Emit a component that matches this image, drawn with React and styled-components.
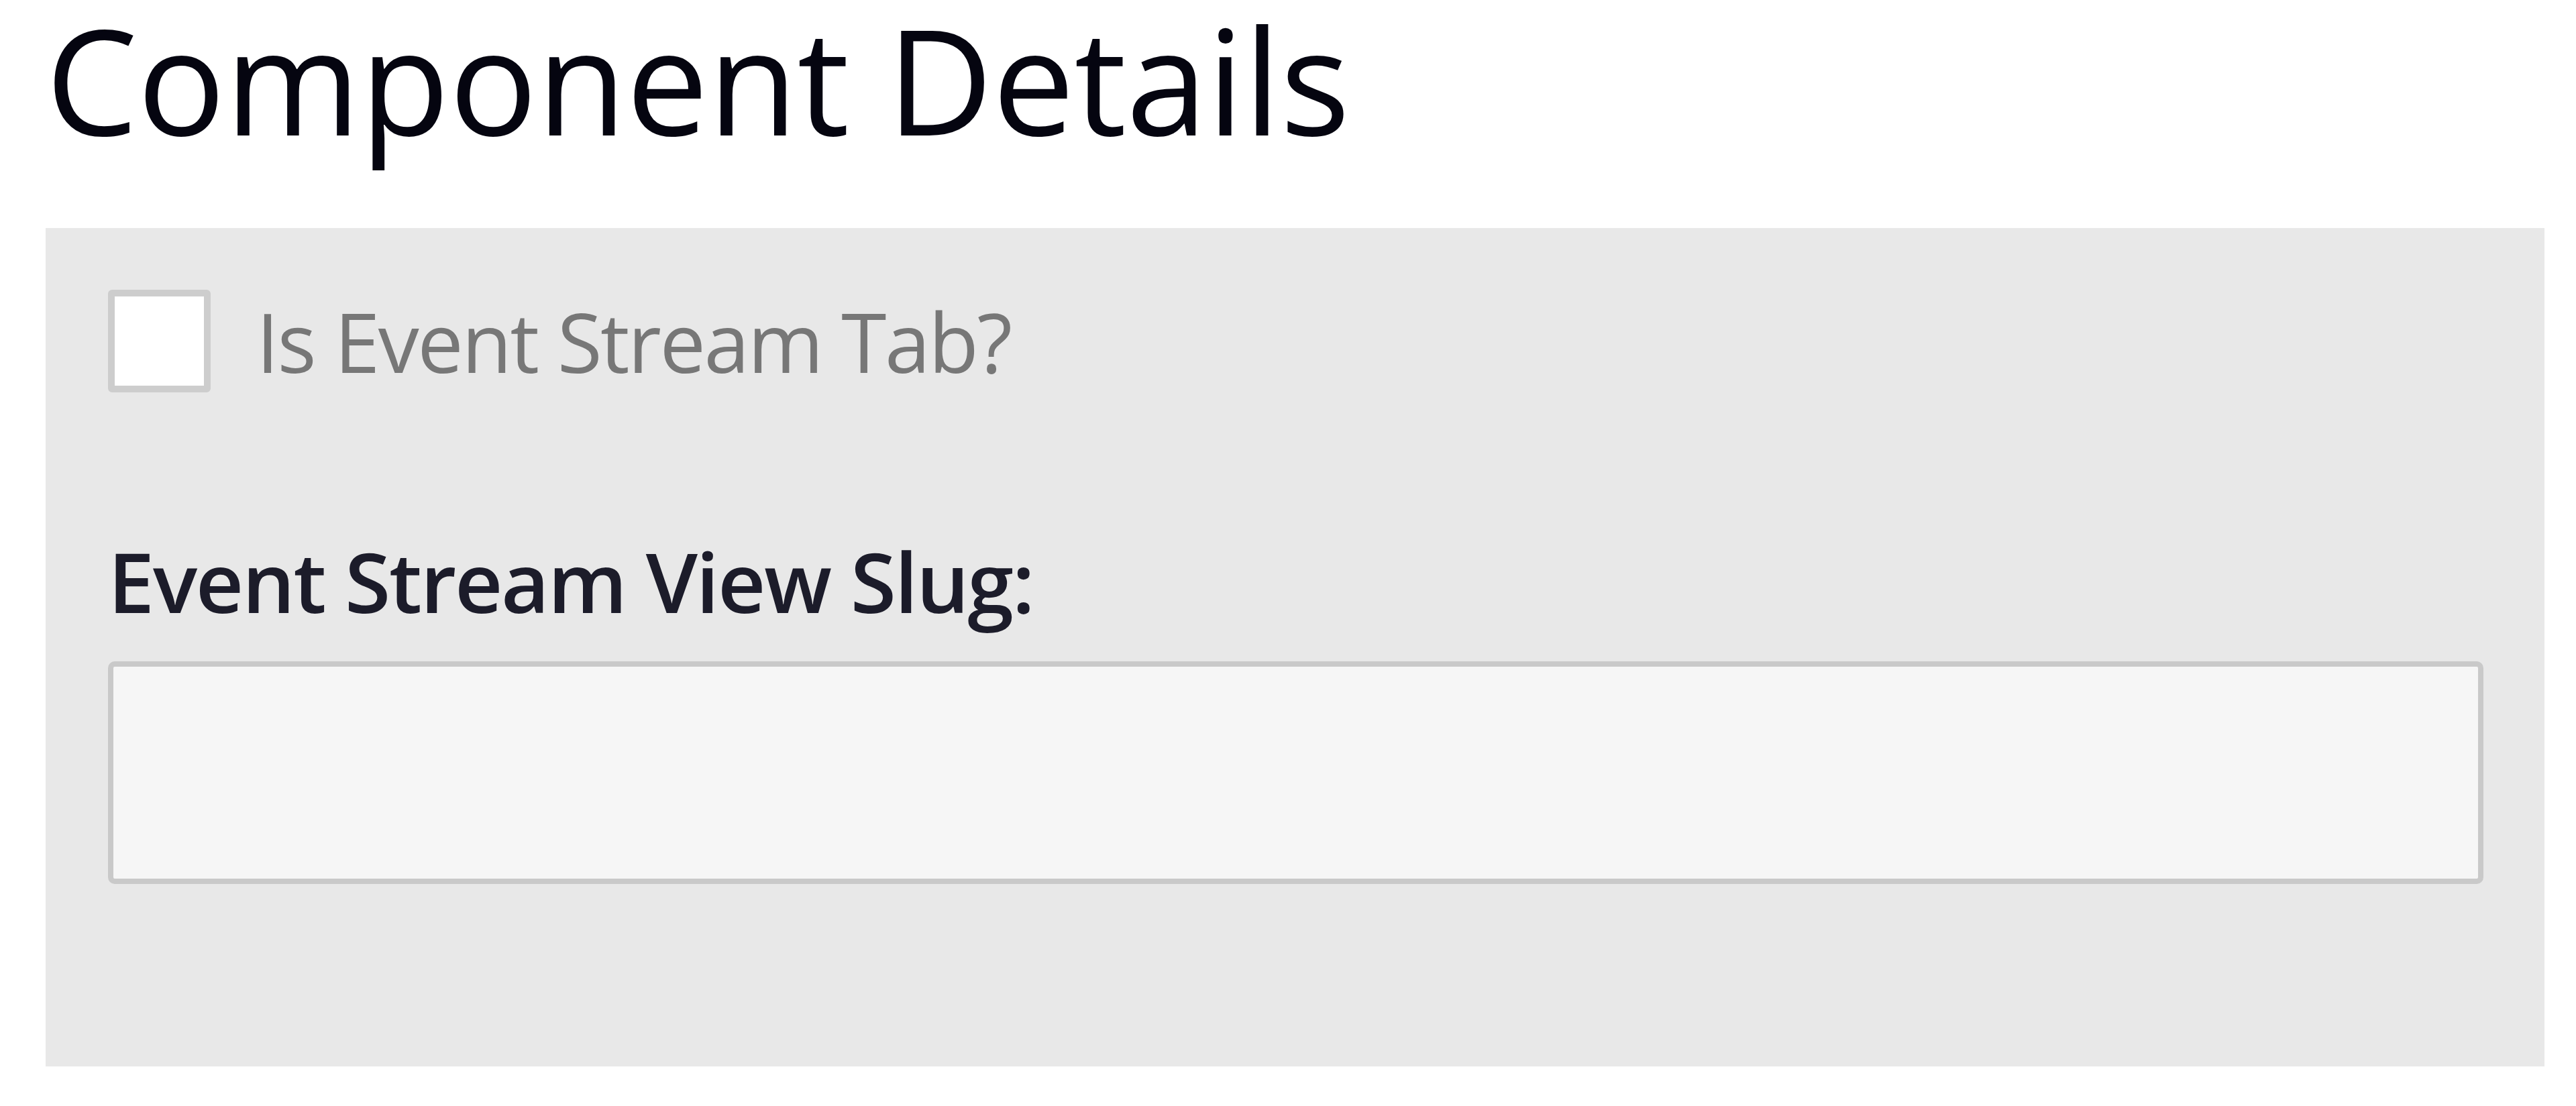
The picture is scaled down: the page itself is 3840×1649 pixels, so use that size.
import React from 'react'
import styled, { createGlobalStyle } from 'styled-components'

const GlobalStyle = createGlobalStyle`
  html, body {
    margin: 0;
    padding: 0;
    background: #ffffff;
  }
  body {
    font-family: "Open Sans", "Noto Sans", "Liberation Sans", sans-serif;
  }
`

const Page = styled.div`
  padding: 9px 47px 0 68px;
`

const Title = styled.h1`
  margin: 0 0 113px 0;
  font-size: 218px;
  font-weight: 400;
  line-height: 1;
  color: #050510;
  letter-spacing: -0.5px;
`

const Panel = styled.section`
  background: #e8e8e8;
  height: 1250px;
  box-sizing: border-box;
  padding: 92px 91px 0 93px;
`

const CheckRow = styled.label`
  display: flex;
  align-items: center;
  gap: 68px;
  margin-bottom: 219px;
  cursor: pointer;
`

const Box = styled.input.attrs({ type: 'checkbox' })`
  appearance: none;
  margin: 0;
  width: 153px;
  height: 153px;
  box-sizing: border-box;
  background: #ffffff;
  border: 10px solid #cdcdcd;
  border-radius: 6px;
`

const CheckText = styled.span`
  font-size: 122px;
  line-height: 1;
  color: #777777;
  letter-spacing: -2.5px;
`

const FieldLabel = styled.label`
  display: block;
  font-size: 124px;
  font-weight: 600;
  line-height: 1;
  color: #1c1c2a;
  letter-spacing: -2.3px;
  margin-bottom: 58px;
`

const TextField = styled.input`
  display: block;
  width: 100%;
  height: 332px;
  box-sizing: border-box;
  margin: 0;
  background: #f6f6f6;
  border: 8px solid #c9c9c9;
  border-radius: 10px;
  outline: none;
  font-family: inherit;
  font-size: 110px;
  padding: 0 40px;
`

function App () {
  return (
    <>
      <GlobalStyle />
      <Page>
        <Title>Component Details</Title>
        <Panel>
          <CheckRow>
            <Box />
            <CheckText>Is Event Stream Tab?</CheckText>
          </CheckRow>
          <FieldLabel htmlFor="slug">Event Stream View Slug:</FieldLabel>
          <TextField id="slug" type="text" />
        </Panel>
      </Page>
    </>
  )
}

export default App
